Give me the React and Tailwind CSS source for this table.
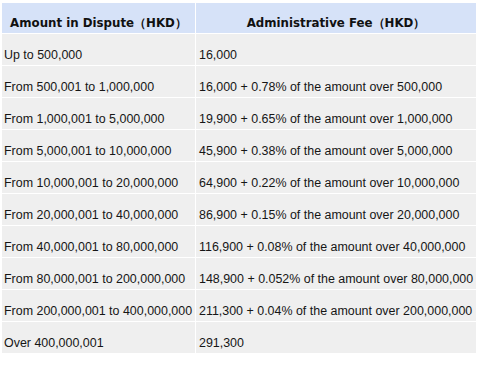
import React from 'react';

const rows = [
  ['Up to 500,000', '16,000'],
  ['From 500,001 to 1,000,000', '16,000 + 0.78% of the amount over 500,000'],
  ['From 1,000,001 to 5,000,000', '19,900 + 0.65% of the amount over 1,000,000'],
  ['From 5,000,001 to 10,000,000', '45,900 + 0.38% of the amount over 5,000,000'],
  ['From 10,000,001 to 20,000,000', '64,900 + 0.22% of the amount over 10,000,000'],
  ['From 20,000,001 to 40,000,000', '86,900 + 0.15% of the amount over 20,000,000'],
  ['From 40,000,001 to 80,000,000', '116,900 + 0.08% of the amount over 40,000,000'],
  ['From 80,000,001 to 200,000,000', '148,900 + 0.052% of the amount over 80,000,000'],
  ['From 200,000,001 to 400,000,000', '211,300 + 0.04% of the amount over 200,000,000'],
  ['Over 400,000,001', '291,300'],
];

const App = () => {
  return (
    <div className="w-[480px] h-[376px] bg-white pt-[3px] pl-[2px]">
      <div className="w-[474px] grid grid-cols-[193px_1fr] gap-[1px] bg-white">
        {/* header */}
        <div className="h-[30px] bg-[#d6e2f8] flex items-end justify-center pb-[3px] leading-[14px] text-[11.8px] font-bold text-[#111] font-['DejaVu_Sans','Verdana',sans-serif]">
          Amount in Dispute（HKD）
        </div>
        <div className="h-[30px] bg-[#d6e2f8] flex items-end justify-center pb-[3px] leading-[14px] text-[11.8px] font-bold text-[#111] font-['DejaVu_Sans','Verdana',sans-serif]">
          Administrative Fee（HKD）
        </div>

        {rows.map(([amount, fee]) => (
          <React.Fragment key={amount}>
            <div className="h-[31px] bg-[#efefef] flex items-end pl-[2px] pb-[3px] leading-[14px] text-[12.45px] text-[#161616] font-['Liberation_Sans',Arial,sans-serif] whitespace-nowrap">
              {amount}
            </div>
            <div className="h-[31px] bg-[#efefef] flex items-end pl-[3px] pb-[3px] leading-[14px] text-[12.45px] text-[#161616] font-['Liberation_Sans',Arial,sans-serif] whitespace-nowrap">
              {fee}
            </div>
          </React.Fragment>
        ))}
      </div>
    </div>
  );
};

export default App;
